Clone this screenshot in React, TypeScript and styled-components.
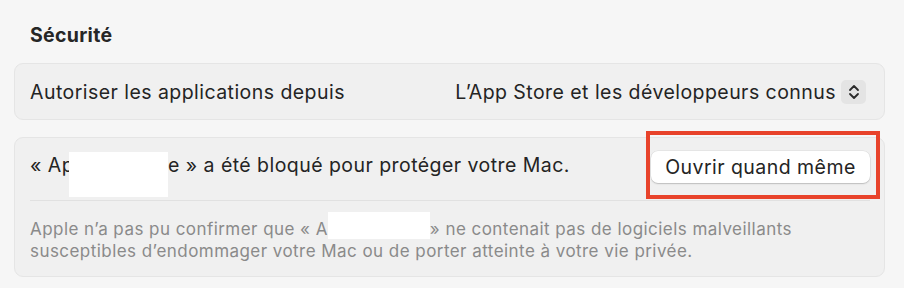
import React from 'react';
import styled, { createGlobalStyle } from 'styled-components';

const GlobalStyle = createGlobalStyle`
  html, body {
    margin: 0;
    padding: 0;
    background: #f6f6f6;
  }
  body {
    font-family: Inter, "Noto Sans", "Liberation Sans", sans-serif;
    color: #242424;
    -webkit-font-smoothing: antialiased;
  }
`;

const Page = styled.div`
  width: 904px;
  height: 288px;
  box-sizing: border-box;
  padding: 22px 19px 0 14px;
  overflow: hidden;
`;

const SectionTitle = styled.h2`
  margin: 0 0 15px;
  padding-left: 16px;
  font-size: 19.5px;
  font-weight: 700;
  letter-spacing: 0.3px;
  line-height: 26px;
  color: #262626;
`;

const Card = styled.div`
  position: relative;
  background: #f0f0f0;
  border: 1px solid #e5e5e5;
  border-radius: 9px;
  box-sizing: border-box;
  & + & {
    margin-top: 17px;
  }
`;

const Row = styled.div<{ $height: number; $top: number; $right: number }>`
  display: flex;
  align-items: flex-start;
  justify-content: space-between;
  height: ${(p) => p.$height}px;
  box-sizing: border-box;
  padding: ${(p) => p.$top}px ${(p) => p.$right}px 0 15px;
`;

const Label = styled.span<{ $offset?: number }>`
  margin-top: ${(p) => p.$offset ?? 0}px;
  font-size: 19.5px;
  letter-spacing: 0.45px;
  line-height: 26px;
  color: #242424;
  white-space: nowrap;
`;

const PopupValue = styled.div`
  display: flex;
  align-items: center;
  gap: 5px;
  height: 26px;
  font-size: 19.5px;
  letter-spacing: 0.45px;
  color: #242424;
  white-space: nowrap;
`;

const Stepper = styled.span`
  display: inline-flex;
  align-items: center;
  justify-content: center;
  width: 25px;
  height: 24px;
  border-radius: 5px;
  background: #e4e4e4;
`;

const Button = styled.button`
  width: 219px;
  height: 32px;
  border: none;
  border-radius: 7px;
  background: #ffffff;
  box-shadow: 0 1px 1.5px rgba(0, 0, 0, 0.18), 0 0 0 0.5px rgba(0, 0, 0, 0.08);
  font-family: inherit;
  font-size: 19.5px;
  letter-spacing: 0.45px;
  color: #242424;
  padding: 0;
`;

const Divider = styled.div`
  height: 1px;
  background: #e1e1e1;
  margin: 0 14px 0 15px;
`;

const Note = styled.p`
  margin: 0;
  padding: 17px 15px 14px;
  font-size: 17px;
  letter-spacing: 0.45px;
  line-height: 22px;
  color: #8a8a8a;
  white-space: nowrap;
`;

// white box that hides part of the app name, like the redaction in the capture
const Redacted = styled.span<{ $w: number; $lh: number; $top: number; $h: number; $shift?: number }>`
  position: relative;
  display: inline-block;
  width: ${(p) => p.$w}px;
  height: ${(p) => p.$lh}px;
  margin-left: ${(p) => p.$shift ?? 0}px;
  vertical-align: top;
  &::after {
    content: '';
    position: absolute;
    left: 0;
    top: ${(p) => p.$top}px;
    width: 100%;
    height: ${(p) => p.$h}px;
    background: #ffffff;
  }
`;

const Highlight = styled.div`
  position: absolute;
  left: 631px;
  top: -7px;
  width: 234px;
  height: 68px;
  box-sizing: border-box;
  border: 4.5px solid #e8432b;
  pointer-events: none;
`;

const UpDownIcon = () => (
  <svg width="12" height="16" viewBox="0 0 12 16" fill="none">
    <path d="M2 6 L6 2 L10 6" stroke="#2a2a2a" strokeWidth="1.8" strokeLinecap="round" strokeLinejoin="round" />
    <path d="M2 10 L6 14 L10 10" stroke="#2a2a2a" strokeWidth="1.8" strokeLinecap="round" strokeLinejoin="round" />
  </svg>
);

export default function App() {
  return (
    <>
      <GlobalStyle />
      <Page>
        <SectionTitle>Sécurité</SectionTitle>
        <Card>
          <Row $height={55} $top={15} $right={18}>
            <Label>Autoriser les applications depuis</Label>
            <PopupValue>
              L’App Store et les développeurs connus
              <Stepper>
                <UpDownIcon />
              </Stepper>
            </PopupValue>
          </Row>
        </Card>
        <Card>
          <Row $height={62} $top={13} $right={14}>
            <Label $offset={1}>
              « Ap<Redacted $w={99} $lh={26} $top={0} $h={45} $shift={-5} />e » a été bloqué pour protéger votre Mac.
            </Label>
            <Button>Ouvrir quand même</Button>
          </Row>
          <Divider />
          <Note>
            Apple n’a pas pu confirmer que « A<Redacted $w={102} $lh={22} $top={-6} $h={27} />» ne contenait pas de logiciels malveillants
            <br />
            susceptibles d’endommager votre Mac ou de porter atteinte à votre vie privée.
          </Note>
          <Highlight />
        </Card>
      </Page>
    </>
  );
}
